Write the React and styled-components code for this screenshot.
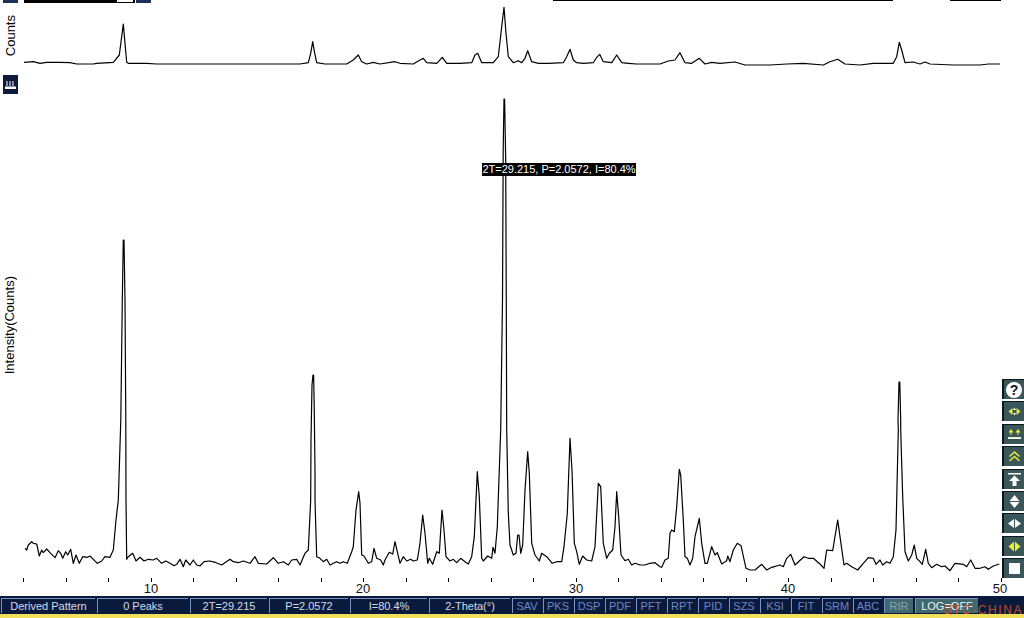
import React from 'react';
import styled, { createGlobalStyle } from 'styled-components';

// traces are read off 3x crops of the plot, so each chunk keeps its crop origin
const crop = (x0, y0, pts) => {
    const out = [];
    for (let i = 0; i < pts.length; i += 2) {
        out.push(`${(x0 + pts[i] / 3).toFixed(1)},${(y0 + pts[i + 1] / 3).toFixed(1)}`);
    }
    return out.join(' ');
};

const mainTrace = [
    crop(0, 500, [75,145,80,150,85,135,95,125,100,130,110,132,118,168,125,150,130,158,140,147,150,158,165,173,175,152,182,160,188,175,197,155,203,165,212,148,220,190,228,165,238,190,248,170,262,172,270,168,280,178,292,190,305,183,315,170,330,172,340,150,348,60,355,0]),
    '120.8,420 122.3,300 123.3,240 124,240 125,300 125.8,420',
    crop(0, 500, [378,0,380,178,385,170,398,160,408,183,420,172,432,183,445,178,460,180,470,175,485,190,497,183,510,190,522,197,530,193,540,178,550,200,557,180,570,195,580,180,590,195,600,198,612,185,630,183,645,187,665,195,690,178,700,185,715,188,730,183,750,190,765,170,775,190,800,192,820,173,835,190,850,185,865,195,875,180,890,178,900,195,915,160,925,150,932,0]),
    '311,440 312,385 313,375 313.6,375 314.2,405 315,470',
    crop(0, 500, [945,0,950,170,960,175,970,185,980,178,990,195,1000,190,1010,185,1020,190]),
    crop(340, 430, [10,395,22,400,35,365,40,350,48,240,56,185,60,220,65,375,72,378,85,400,95,395,102,355,110,385,122,390,130,405,135,390,148,367,158,372,165,335,172,365,180,400,190,380,200,393,212,388,220,393,232,390,240,340,248,255,255,310,263,400,268,385,278,403,290,365,298,370,306,240,312,300,318,380,330,393,340,388,350,398,362,385,375,395,385,402,395,380,403,320,412,125,418,200,425,385,430,393,443,378,455,385,459,352,465,370,472,290,482,0]),
    '502.5,300 503.2,150 504,99 504.6,99 505.7,160 506.3,310',
    crop(340, 430, [500,0,505,250,510,345,520,375,528,370,533,315,537,315,542,370,548,345,555,180,563,65,568,130,575,340,585,375,598,393,605,370,620,380,637,400,650,395,665,395,672,350,682,250,690,25,696,120,703,340,710,365,718,403,728,378,740,390,755,393,765,350,775,160,782,170,790,340,800,385,808,370,818,360,825,290,830,185,836,260,843,375,855,392,865,388,875,405,885,400,900,405,915,405,930,400,945,398,960,410,965,412,975,390,985,385,990,310,995,300,1003,305,1010,230]),
    crop(660, 430, [58,118,62,135,70,270,75,380,82,385,90,405,98,385,105,320,118,265,125,340,135,400,142,400,155,350,165,375,172,368,185,402,200,392,203,378,210,395,220,360,232,340,243,347,258,415,270,420,285,420,305,403,320,420,335,412,360,405,370,410,380,385,392,373,405,405,418,393,432,380,445,385,460,385,480,402,492,415,500,360,518,362,533,270,540,320,552,405,560,400,575,410,593,420,610,400,625,383,640,385,648,403,660,390,668,405,680,395,690,400,700,380,708,300,715,0]),
    '898,420 899,382 899.8,382 900.7,420',
    crop(660, 430, [722,0,728,200,735,365,745,393,755,375,763,345,770,385,780,395,787,403,797,358,805,400,815,413,830,403,845,410,855,408,870,422,885,400,910,403,920,410,932,390,945,415,960,415,975,410,985,418,1000,408,1018,402]),
].join(' ');

const overviewTrace = [
    crop(0, 0, [72,187,100,185,120,190,140,187,180,187,210,188,230,192,280,192,290,190,340,187,358,165,365,110,370,72,375,130,380,187,385,190,420,190,440,190,470,192,540,192,580,192,690,192,770,192,820,192,870,192]),
    crop(300, 0, [0,192,25,188,32,160,38,125,44,160,50,188,75,192,140,192,160,180,175,165,185,185,200,192,220,187,240,192,285,185,300,190,340,192,360,180,370,175,380,188,410,190,427,172,440,190,480,190,515,188,525,165,533,160,545,188,580,188,595,170,605,80,612,22,618,100,625,170,640,188,655,182,665,188,675,175,683,152,695,185,715,190,745,190,790,188,800,170,810,148,820,180,830,188,850,190,880,188,890,172,899,163,910,185,935,188,950,165,965,188,985,190,1010,192]),
    crop(660, 0, [0,192,25,183,45,180,60,158,75,188,95,190,118,175,135,192,155,187,180,190,225,186,255,195,330,195,380,192,430,190,490,195,510,185,533,178,555,192,600,195,640,190,700,190,710,170,718,127,725,150,735,188,760,186,780,192,795,186,810,192,880,195,960,195,985,192,1020,192]),
].join(' ');

const ticks = Array.from({ length: 24 }, (_, i) => Math.floor(23.5 + i * 42.5) + 0.5);
const axisLabels = [[151, '10'], [363, '20'], [576, '30'], [788, '40'], [1000, '50']];

const readouts = [
    ['Derived Pattern', 94], ['0 Peaks', 91], ['2T=29.215', 77], ['P=2.0572', 79], ['I=80.4%', 77], ['2-Theta(°)', 81],
];
const tools = ['SAV', 'PKS', 'DSP', 'PDF', 'PFT', 'RPT', 'PID', 'SZS', 'KSI', 'FIT', 'SRM', 'ABC'];

const white = '#fff';
const lime = '#e6f03c';

const chartIcons = () => [
    <HelpGlyph key="help">?</HelpGlyph>,
    <svg key="move" width="17" height="15" viewBox="0 0 17 15">
        <path d="M2.5 7.5 6.5 4v7zM14.5 7.5 10.5 4v7z" fill={lime} />
        <path d="M8.5 3.5 10 6H7zM8.5 11.5 7 9h3z" fill={white} />
    </svg>,
    <svg key="fit" width="17" height="15" viewBox="0 0 17 15">
        <path d="M5 2 7.5 5.5h-5zM12 2l2.5 3.5h-5z" fill={lime} />
        <path d="M5 5v3M12 5v3" stroke={lime} />
        <path d="M2 10h13v2H2z" fill="#eef2e0" />
    </svg>,
    <svg key="double" width="17" height="15" viewBox="0 0 17 15" fill="none" stroke={lime} strokeWidth="1.5">
        <path d="M3.5 7.5 8.5 3l5 4.500M3.5 12 8.500 7.500l5 4.500" />
    </svg>,
    <svg key="top" width="17" height="15" viewBox="0 0 17 15">
        <path d="M2 1h13v1.500H2z" fill={white} />
        <path d="M8.500 3.500 14 9h-3.500v5h-4V9H3z" fill={white} />
    </svg>,
    <svg key="updown" width="17" height="15" viewBox="0 0 17 15">
        <path d="M8.500 1 13.500 7h-10zM8.500 14l-5-6h10z" fill={white} />
    </svg>,
    <svg key="leftright" width="17" height="15" viewBox="0 0 17 15">
        <path d="M2 7.500 8 3v9zM15 7.500 9 3v9z" fill={white} />
    </svg>,
    <svg key="shift" width="17" height="15" viewBox="0 0 17 15">
        <path d="M2.500 7.500 8 2.500v10zM14.500 7.500 9 2.500v10z" fill={lime} />
    </svg>,
    <svg key="stop" width="17" height="15" viewBox="0 0 17 15">
        <path d="M3 2h11v11H3z" fill={white} />
    </svg>,
];

const App = () => {
    return (
        <Page>
            <GlobalStyle />
            <TopStrip>
                <StripButton />
                <StripMeter><StripKnob /></StripMeter>
                <StripButton />
                <StripSpacer />
                <StripLine $width={340} />
                <StripGap />
                <StripLine $width={51} />
                <StripEnd />
            </TopStrip>
            <OverviewRow>
                <Gutter>
                    <OverviewLabel>Counts</OverviewLabel>
                </Gutter>
                <svg width="1001" height="70" viewBox="23 3 1001 70">
                    <Trace points={overviewTrace} />
                </svg>
            </OverviewRow>
            <MainRow>
                <Gutter>
                    <RulerButton>
                        <svg width="11" height="9" viewBox="0 0 11 9">
                            <path d="M0 6.500h11V9H0z" fill="#fff" />
                            <path d="M2 1v5M5 1v5M8 1v5" stroke="#fff" />
                        </svg>
                    </RulerButton>
                    <IntensityLabel>Intensity(Counts)</IntensityLabel>
                </Gutter>
                <svg width="1001" height="523" viewBox="23 73 1001 523">
                    <Trace points={mainTrace} />
                    {ticks.map((x) => (
                        <path key={x} d={`M${x} 578v4`} stroke="#000" fill="none" />
                    ))}
                    {axisLabels.map(([x, label]) => (
                        <AxisText key={label} x={x} y={593} textAnchor="middle">{label}</AxisText>
                    ))}
                </svg>
            </MainRow>
            <StatusBar>
                {readouts.map(([label, width]) => (
                    <Readout key={label} $width={width}>{label}</Readout>
                ))}
                {tools.map((label) => (
                    <ToolCell key={label}>{label}</ToolCell>
                ))}
                <ToolCell $on>RIR</ToolCell>
                <ToolCell $on $bright $width={63}>LOG=OFF</ToolCell>
            </StatusBar>
            <YellowEdge />
            <Tooltip>2T=29.215, P=2.0572, I=80.4%</Tooltip>
            <ButtonStack>
                {chartIcons().map((icon) => (
                    <ChartButton key={icon.key}>{icon}</ChartButton>
                ))}
            </ButtonStack>
            <Watermark>STC-CHINA</Watermark>
        </Page>
    );
};

export default App;

const GlobalStyle = createGlobalStyle`
html, body {
    margin: 0;
    padding: 0;
    background: #fff;
}
svg {
    display: block;
}
`
const Page = styled.div`
position: relative;
width: 1024px;
height: 618px;
overflow: hidden;
display: flex;
flex-direction: column;
background: #fff;
font-family: "Liberation Sans", Arial, sans-serif;
color: #000;
`
const TopStrip = styled.div`
display: flex;
height: 3px;
flex: none;
padding-left: 3px;
`
const StripButton = styled.div`
width: 15px;
background: #1c3158;
&:nth-child(3) {
    margin-left: 1px;
}
`
const StripMeter = styled.div`
width: 111px;
background: #000;
margin-left: 6px;
position: relative;
`
const StripKnob = styled.div`
position: absolute;
right: 2px;
top: 0;
width: 16px;
height: 2px;
background: #fff;
`
const StripSpacer = styled.div`
width: 402px;
`
const StripLine = styled.div`
width: ${(p) => p.$width}px;
height: 1px;
background: #000;
`
const StripGap = styled.div`
width: 57px;
`
const StripEnd = styled.div`
flex: 1;
`
const OverviewRow = styled.div`
display: flex;
height: 70px;
flex: none;
`
const MainRow = styled.div`
display: flex;
flex: 1;
min-height: 0;
`
const Gutter = styled.div`
width: 23px;
flex: none;
display: flex;
flex-direction: column;
`
const OverviewLabel = styled.div`
writing-mode: vertical-rl;
transform: rotate(180deg);
font-size: 13px;
line-height: 14px;
margin: 12px 0 0 4px;
`
const IntensityLabel = styled.div`
writing-mode: vertical-rl;
transform: rotate(180deg);
font-size: 13px;
line-height: 14px;
margin: 182px 0 0 3px;
`
const RulerButton = styled.div`
width: 15px;
height: 19px;
margin: 2px 0 0 3px;
background: #0d1a3c;
display: flex;
align-items: center;
justify-content: center;
`
const Trace = styled.polyline`
fill: none;
stroke: #000;
stroke-width: 1.2;
stroke-linejoin: round;
`
const AxisText = styled.text`
font-size: 13px;
font-family: "Liberation Sans", Arial, sans-serif;
fill: #111;
`
const StatusBar = styled.div`
display: flex;
gap: 2px;
height: 18px;
flex: none;
box-sizing: border-box;
padding: 2px 0 1px 1px;
background: #0a1a3c;
`
const Readout = styled.div`
width: ${(p) => p.$width}px;
flex: none;
box-sizing: border-box;
border-top: 1px solid #7d93c6;
border-left: 1px solid #7d93c6;
display: flex;
align-items: center;
justify-content: center;
font-size: 11px;
color: #d4dcec;
white-space: nowrap;
`
const ToolCell = styled(Readout)`
width: ${(p) => p.$width || 29}px;
background: ${(p) => (p.$on ? '#41686e' : 'transparent')};
color: ${(p) => (p.$bright ? '#f0f4f4' : p.$on ? '#86a4b4' : '#6f86c6')};
`
const YellowEdge = styled.div`
height: 4px;
flex: none;
background: #f2e05c;
`
const Tooltip = styled.div`
position: absolute;
left: 482px;
top: 163px;
width: 154px;
height: 13px;
background: #000;
color: #fff;
font-size: 11px;
line-height: 13px;
text-align: center;
white-space: nowrap;
`
const ButtonStack = styled.div`
position: absolute;
right: 0;
top: 379px;
display: flex;
flex-direction: column;
gap: 2.4px;
`
const ChartButton = styled.div`
width: 22px;
height: 20px;
box-sizing: border-box;
border-left: 2px solid #10181c;
border-top: 1px solid #10181c;
background: #3a5659;
display: flex;
align-items: center;
justify-content: center;
`
const HelpGlyph = styled.div`
width: 16px;
height: 16px;
border-radius: 50%;
background: #fff;
color: #10181c;
font-size: 14px;
font-weight: bold;
line-height: 16px;
text-align: center;
`
const Watermark = styled.div`
position: absolute;
right: 1px;
top: 604px;
font-size: 12px;
line-height: 12px;
letter-spacing: 1.6px;
color: #c04a28;
white-space: nowrap;
`
